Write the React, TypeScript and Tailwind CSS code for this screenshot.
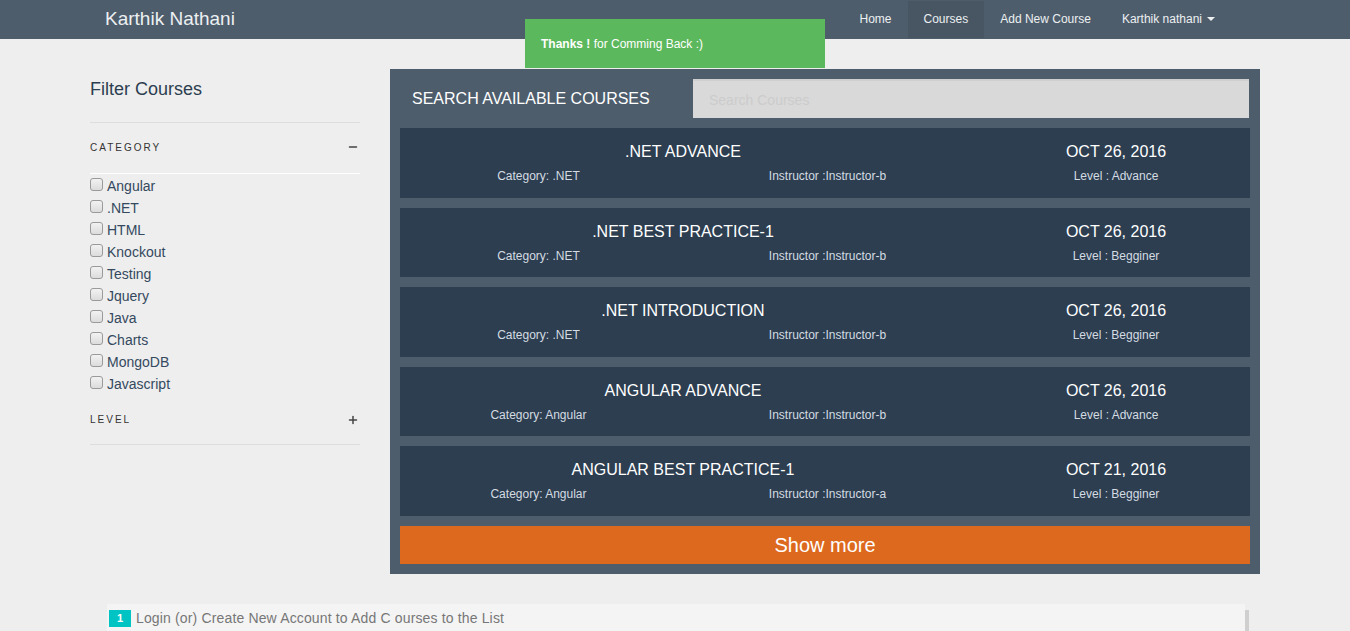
import { Minus, Plus } from 'lucide-react';

const COURSES = [
  { title: '.NET ADVANCE', category: '.NET', instructor: 'Instructor-b', date: 'OCT 26, 2016', level: 'Advance' },
  { title: '.NET BEST PRACTICE-1', category: '.NET', instructor: 'Instructor-b', date: 'OCT 26, 2016', level: 'Begginer' },
  { title: '.NET INTRODUCTION', category: '.NET', instructor: 'Instructor-b', date: 'OCT 26, 2016', level: 'Begginer' },
  { title: 'ANGULAR ADVANCE', category: 'Angular', instructor: 'Instructor-b', date: 'OCT 26, 2016', level: 'Advance' },
  { title: 'ANGULAR BEST PRACTICE-1', category: 'Angular', instructor: 'Instructor-a', date: 'OCT 21, 2016', level: 'Begginer' },
];

const CATEGORIES = ['Angular', '.NET', 'HTML', 'Knockout', 'Testing', 'Jquery', 'Java', 'Charts', 'MongoDB', 'Javascript'];

function Navbar() {
  return (
    <nav className="h-[39px] bg-[#4e5d6c]">
      <div className="mx-auto flex h-full w-[1140px] items-center justify-between pb-[2px]">
        <a className="text-[19px] leading-none text-[#ecf0f1]">Karthik Nathani</a>
        <ul className="mr-[15px] -mb-[2px] flex h-full text-[12px] text-[#ecf0f1]">
          <li className="flex items-center px-[16px] pb-[2px]">Home</li>
          <li className="flex items-center bg-[#485664] px-[16px] pb-[2px]">Courses</li>
          <li className="flex items-center px-[16px] pb-[2px]">Add New Course</li>
          <li className="flex items-center gap-[5px] px-[15px] pb-[2px]">
            Karthik nathani
            <span className="mt-[1px] h-0 w-0 border-x-[4px] border-t-[4px] border-x-transparent border-t-[#ecf0f1]" />
          </li>
        </ul>
      </div>
    </nav>
  );
}

function Checkbox() {
  return <span className="h-[13px] w-[13px] shrink-0 rounded-[3px] border border-[#9a9a9a] bg-gradient-to-b from-[#f2f2f2] to-[#dcdcdc]" />;
}

function Sidebar() {
  return (
    <aside className="w-[270px] shrink-0 pt-[30px] text-[#2c3e50]">
      <h3 className="h-[40px] text-[18px] leading-[40px] text-[#2c3e50]">Filter Courses</h3>
      <div className="mt-[13px] border-t border-[#dddddd]" />
      <div className="flex h-[51px] items-center justify-between border-b border-white pb-[2px]">
        <span className="text-[10px] tracking-[2px] text-[#333]">CATEGORY</span>
        <Minus size={12} strokeWidth={3} className="mr-[1px] text-[#444]" />
      </div>
      <ul className="pt-[1px]">
        {CATEGORIES.map((c) => (
          <li key={c} className="flex h-[22px] items-center gap-[4px] text-[14px] text-[#34495e]">
            <span className="-mt-[3px] flex"><Checkbox /></span>
            {c}
          </li>
        ))}
      </ul>
      <div className="flex h-[50px] items-center justify-between border-b border-[#dddddd]">
        <span className="text-[10px] tracking-[2px] text-[#333]">LEVEL</span>
        <Plus size={12} strokeWidth={3} className="mr-[1px] text-[#444]" />
      </div>
    </aside>
  );
}

function CourseCard({ c }: { c: (typeof COURSES)[number] }) {
  return (
    <div className="flex h-[69.5px] bg-[#2c3e50] text-white">
      <div className="flex w-[566px] flex-col">
        <div className="mt-[14px] text-center text-[16px] leading-[20px]">{c.title}</div>
        <div className="mt-[6px] flex text-[12px] leading-[16px] text-[#d4dbe2]">
          <span className="w-1/2 pr-[6px] text-center">Category: {c.category}</span>
          <span className="w-1/2 pl-[6px] text-center">Instructor :{c.instructor}</span>
        </div>
      </div>
      <div className="ml-[16px] flex flex-1 flex-col">
        <div className="mt-[14px] text-center text-[16px] leading-[20px]">{c.date}</div>
        <div className="mt-[6px] text-center text-[12px] leading-[16px] text-[#d4dbe2]">Level : {c.level}</div>
      </div>
    </div>
  );
}

function CoursePanel() {
  return (
    <section className="mt-[30px] w-[870px] bg-[#4e5d6c] p-[10px]">
      <div className="flex h-[39px] items-center justify-between">
        <h2 className="pl-[12px] text-[16px] text-white">SEARCH AVAILABLE COURSES</h2>
        <input
          placeholder="Search Courses"
          className="mr-[1px] h-[39px] w-[556px] border-t-2 border-[#cfcfcf] bg-[#d9d9d9] px-[16px] text-[14px] outline-none placeholder:text-[#cccccc]"
        />
      </div>
      <div className="mt-[10px] flex flex-col gap-[10px]">
        {COURSES.map((c) => (
          <CourseCard key={c.title} c={c} />
        ))}
        <button className="mt-[0.5px] h-[38px] bg-[#dd691e] text-[20px] text-white">Show more</button>
      </div>
    </section>
  );
}

export default function App() {
  return (
    <div className="relative min-h-[631px] overflow-hidden bg-[#eeeeee] font-['Liberation_Sans',Arial,sans-serif]">
      <Navbar />
      <div className="absolute left-[525px] top-[19px] flex h-[49px] w-[300px] items-center bg-[#5cb85c] pl-[16px] text-[12px] text-white">
        <b>Thanks !</b>&nbsp;for Comming Back :)
      </div>
      <main className="mx-auto flex w-[1170px] gap-[30px]">
        <Sidebar />
        <CoursePanel />
      </main>
      <div className="mx-auto mt-[30px] w-[1140px] pl-[2px]">
        <div className="flex h-[40px] items-start bg-[#f4f4f4] pt-[6px] shadow-[5px_5px_0_-1px_#cfcfcf]">
          <span className="ml-[2px] flex h-[17px] w-[22px] items-center justify-center bg-[#00c4c4] text-[11px] font-bold text-white">1</span>
          <span className="ml-[5px] text-[14px] leading-[17px] tracking-[0.15px] text-[#777]">Login (or) Create New Account to Add C ourses to the List</span>
        </div>
      </div>
    </div>
  );
}
